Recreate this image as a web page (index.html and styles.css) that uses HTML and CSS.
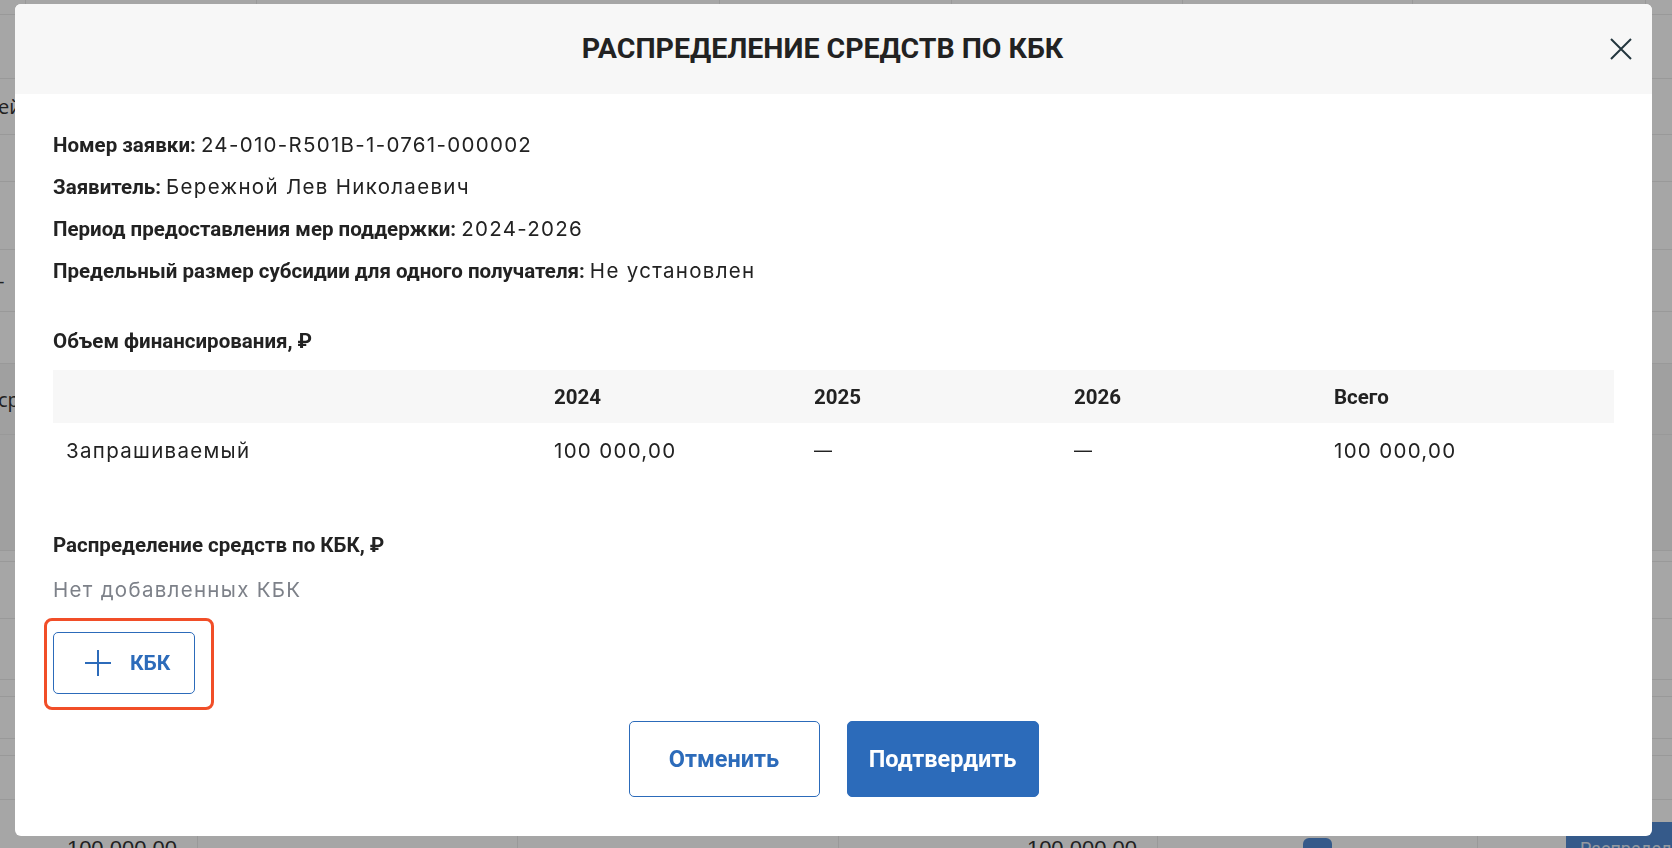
FILE: index.html
```html
<!DOCTYPE html>
<html lang="ru">
<head>
<meta charset="utf-8">
<title>Распределение средств по КБК</title>
<link rel="stylesheet" href="styles.css">
</head>
<body>
<div class="page" aria-hidden="true">
  <div class="bg-row top-row">
    <span class="tc"></span><span class="tc"></span><span class="tc"></span><span class="tc"></span><span class="tc"></span><span class="tc"></span><span class="tc"></span><span class="tc"></span>
  </div>
  <div class="bg-row"><span class="bg-left"></span><span class="bg-right">Ор</span></div>
  <div class="bg-row"><span class="bg-left">ей</span><span class="bg-right"></span></div>
  <div class="bg-row"><span class="bg-left"></span><span class="bg-right"></span></div>
  <div class="bg-row"><span class="bg-left"></span><span class="bg-right"></span></div>
  <div class="bg-row"><span class="bg-left">-</span><span class="bg-right"><span class="bg-btn">ре</span></span></div>
  <div class="bg-row"><span class="bg-left"></span><span class="bg-right"></span></div>
  <div class="bg-row shaded"><span class="bg-left">ср</span><span class="bg-right"></span></div>
  <div class="bg-row shaded"><span class="bg-left"></span><span class="bg-right top">ск</span></div>
  <div class="bg-row"><span class="bg-left"></span><span class="bg-right"></span></div>
  <div class="bg-row"><span class="bg-left"></span><span class="bg-right two">е<br>К</span></div>
  <div class="bg-row"><span class="bg-left"></span><span class="bg-right"></span></div>
  <div class="bg-row"><span class="bg-left"></span><span class="bg-right"></span></div>
  <div class="bg-row"><span class="bg-left"></span><span class="bg-right"></span></div>
  <div class="bg-row"><span class="bg-left"></span><span class="bg-right"></span></div>
  <div class="bg-row"><span class="bg-left"></span><span class="bg-right"></span></div>
  <div class="bg-row bottom-row">
    <span class="bc num">100 000,00</span>
    <span class="bc"></span>
    <span class="bc"></span>
    <span class="bc num">100 000,00</span>
    <span class="bc check-cell"><span class="bg-check"></span></span>
    <span class="bc btn-cell"><span class="bg-btn2">Распределить</span></span>
  </div>
</div>

<div class="backdrop"></div>

<div class="modal" role="dialog" aria-labelledby="modal-title">
  <header class="modal-header">
    <h1 class="modal-title" id="modal-title">Распределение средств по КБК</h1>
    <button class="close-btn" type="button" aria-label="Закрыть">
      <svg width="22" height="22" viewBox="0 0 22 22" fill="none" stroke="#23363e" stroke-width="2" stroke-linecap="butt"><path d="M1 1 L21 21 M21 1 L1 21"/></svg>
    </button>
  </header>

  <div class="modal-body">
    <div class="info">
      <p class="info-line"><b>Номер заявки:</b> <span class="val">24-010-R501B-1-0761-000002</span></p>
      <p class="info-line"><b>Заявитель:</b> <span class="val">Бережной Лев Николаевич</span></p>
      <p class="info-line"><b>Период предоставления мер поддержки:</b> <span class="val">2024-2026</span></p>
      <p class="info-line"><b>Предельный размер субсидии для одного получателя:</b> <span class="val">Не установлен</span></p>
    </div>

    <section class="fin">
      <h2 class="section-title">Объем финансирования, ₽</h2>
      <table class="fin-table">
        <colgroup>
          <col class="c-name"><col class="c-year"><col class="c-year"><col class="c-year"><col class="c-total">
        </colgroup>
        <thead>
          <tr><th></th><th>2024</th><th>2025</th><th>2026</th><th>Всего</th></tr>
        </thead>
        <tbody>
          <tr><td>Запрашиваемый</td><td>100 000,00</td><td class="dash">—</td><td class="dash">—</td><td>100 000,00</td></tr>
        </tbody>
      </table>
    </section>

    <section class="kbk">
      <h2 class="section-title">Распределение средств по КБК, ₽</h2>
      <p class="empty">Нет добавленных КБК</p>
      <div class="add-wrap">
        <button class="btn-add" type="button">
          <svg width="28" height="28" viewBox="0 0 28 28" fill="none" stroke="#2c6bba" stroke-width="2"><path d="M14 1 V27 M1 14 H27"/></svg>
          <span>КБК</span>
        </button>
      </div>
    </section>

    <div class="footer">
      <button class="btn btn-outline" type="button">Отменить</button>
      <button class="btn btn-primary" type="button">Подтвердить</button>
    </div>
  </div>
</div>
</body>
</html>
```

FILE: styles.css
```css
* { box-sizing: border-box; }

html, body {
  margin: 0;
  padding: 0;
}

body {
  width: 1672px;
  height: 848px;
  overflow: hidden;
  position: relative;
  background: #ffffff;
  font-family: Roboto, "Liberation Sans", sans-serif;
  color: #222222;
}

/* ---------- underlying page (behind the dialog) ---------- */
.page {
  display: grid;
  grid-template-rows: 15px 64px 56px 47px 68px 62px 52px 71px 116px 11px 57px 61px 17px 42px 17px 44px 48px;
  height: 848px;
  font-family: "Open Sans", sans-serif;
  font-size: 20px;
  color: #333333;
}

.bg-row {
  display: flex;
  justify-content: space-between;
  align-items: center;
  border-bottom: 1px solid #ececec;
  min-height: 0;
}

.bg-row.shaded { background: #f6f6f6; }

.bg-left {
  white-space: nowrap;
  margin-left: -2px;
}

.bg-right {
  width: 18px;
  white-space: nowrap;
  overflow: visible;
  align-self: stretch;
  display: flex;
  align-items: center;
  padding-left: 2px;
}

.bg-right.top {
  align-items: flex-start;
  padding-top: 18px;
}

.bg-right.two {
  flex-direction: column;
  align-items: flex-start;
  justify-content: center;
  line-height: 30px;
}

.bg-btn {
  align-self: flex-start;
  height: 75px;
  width: 40px;
  margin-left: -3px;
  background: #528ad4;
  color: #e3ebf6;
  font-weight: 700;
  display: flex;
  align-items: center;
  padding-left: 2px;
  flex: none;
}

.top-row {
  display: grid;
  grid-template-columns: 26px 231px 463px 232px 231px 230px 233px 1fr;
  align-items: stretch;
}

.tc { border-right: 1px solid #ececec; }

.bottom-row {
  display: grid;
  grid-template-columns: 198px 320px 321px 319px 320px 1fr;
  align-items: stretch;
  border-bottom: 0;
}

.bc {
  border-right: 1px solid #ececec;
  font-family: "Liberation Sans", sans-serif;
  font-size: 22px;
}

.bc.num {
  text-align: right;
  padding: 36px 20px 0 0;
}

.check-cell {
  display: flex;
  justify-content: center;
  padding-top: 38px;
}

.bg-check {
  width: 29px;
  height: 29px;
  border-radius: 6px;
  background: #528ad4;
}

.btn-cell {
  border-right: 0;
  padding: 22px 0 0 88px;
}

.bg-btn2 {
  display: block;
  height: 50px;
  background: #528ad4;
  color: #e3ebf6;
  padding: 16px 0 0 14px;
  font-family: Roboto, sans-serif;
  font-size: 18px;
  white-space: nowrap;
  overflow: hidden;
}

/* ---------- overlay ---------- */
.backdrop {
  position: fixed;
  inset: 0;
  background: rgba(0, 0, 0, 0.35);
}

.modal {
  position: fixed;
  top: 4px;
  left: 15px;
  width: 1637px;
  height: 832px;
  background: #ffffff;
  border-radius: 6px;
  overflow: hidden;
  display: flex;
  flex-direction: column;
}

.modal-header {
  flex: none;
  height: 90px;
  background: #f7f7f7;
  display: flex;
  align-items: center;
  gap: 20px;
  padding: 0 20px 0 40px;
}

.modal-title {
  flex: 1;
  margin: 0;
  text-align: center;
  font-size: 28.5px;
  font-weight: 700;
  text-transform: uppercase;
  color: #222222;
  line-height: 32px;
}

.close-btn {
  width: 22px;
  height: 22px;
  padding: 0;
  border: 0;
  background: none;
  display: block;
}

.close-btn svg { display: block; }

.modal-body {
  padding: 39px 38px 39px;
}

.info-line {
  margin: 0 0 18px;
  font-size: 20.5px;
  line-height: 24px;
  color: #222222;
}

.info-line:last-child { margin-bottom: 0; }

.info-line b { font-weight: 700; }

.val {
  font-family: Inter, "Open Sans", sans-serif;
  font-size: 20.5px;
  letter-spacing: 1.3px;
  color: #222222;
}

.section-title {
  margin: 0;
  font-size: 20.5px;
  line-height: 22px;
  font-weight: 700;
  color: #222222;
}

.fin { margin-top: 47px; }

.fin-table {
  margin-top: 18px;
  width: 100%;
  border-collapse: collapse;
  table-layout: fixed;
  font-size: 20.5px;
}

.c-name { width: 488px; }
.c-year { width: 260px; }

.fin-table th {
  height: 53px;
  padding: 0 13px;
  background: #f7f7f7;
  text-align: left;
  font-weight: 700;
  color: #222222;
}

.fin-table td {
  height: 54px;
  padding: 0 13px;
  text-align: left;
  font-family: Inter, "Open Sans", sans-serif;
  font-size: 20.5px;
  letter-spacing: 1.3px;
  color: #222222;
}

.fin-table td.dash {
  font-size: 18px;
  letter-spacing: 0;
}

.kbk { margin-top: 57px; }

.empty {
  margin: 22px 0 0;
  font-family: Inter, "Open Sans", sans-serif;
  font-size: 20.5px;
  letter-spacing: 1.3px;
  line-height: 24px;
  color: #7d8189;
}

.add-wrap {
  position: relative;
  display: inline-block;
  margin-top: 30px;
  vertical-align: top;
}

.add-wrap::after {
  content: "";
  position: absolute;
  top: -14px;
  left: -9px;
  right: -19px;
  bottom: -16px;
  border: 3px solid #f14e28;
  border-radius: 8px;
  pointer-events: none;
}

.btn-add {
  display: flex;
  align-items: center;
  gap: 18px;
  width: 142px;
  height: 62px;
  padding: 0 0 0 30px;
  border: 1px solid #2c6bba;
  border-radius: 5px;
  background: #ffffff;
  color: #2c6bba;
  font-family: Roboto, sans-serif;
  font-size: 21px;
  font-weight: 700;
}

.btn-add svg { display: block; flex: none; }

.footer {
  margin-top: 27px;
  display: flex;
  justify-content: center;
  gap: 27px;
}

.btn {
  width: 191px;
  height: 76px;
  border-radius: 5px;
  font-family: Roboto, sans-serif;
  font-size: 23.5px;
  font-weight: 700;
  cursor: pointer;
}

.btn-outline {
  background: #ffffff;
  color: #2c6bba;
  border: 1px solid #2c6bba;
}

.btn-primary {
  width: 192px;
  background: #2c6bba;
  color: #ffffff;
  border: 1px solid #2c6bba;
}
```
